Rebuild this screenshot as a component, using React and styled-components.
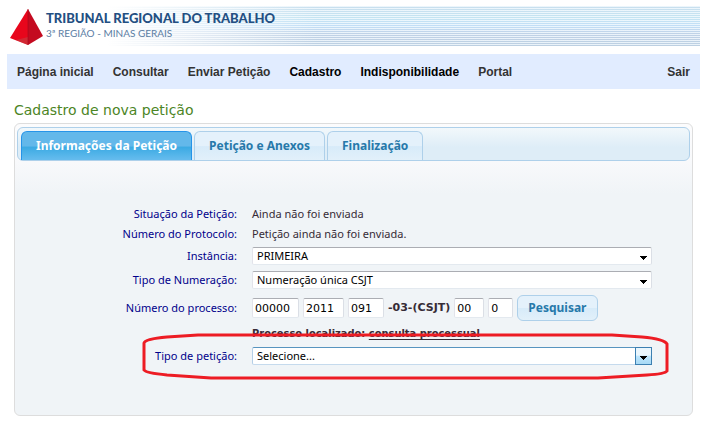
import React from "react";
import styled, { createGlobalStyle, css } from "styled-components";

const GlobalStyle = createGlobalStyle`
  * { box-sizing: border-box; }
  body {
    margin: 0;
    background: #fff;
    font-family: "Noto Sans", "Open Sans", sans-serif;
    font-size: 11px;
    color: #362b36;
  }
`;

const Page = styled.div`
  padding: 6px 6px 10px 7px;
`;

const Banner = styled.header`
  display: flex;
  align-items: flex-start;
  height: 40px;
  padding-left: 1px;
  background:
    linear-gradient(90deg, #fff 0, #fff 100px, rgba(255, 255, 255, 0) 310px),
    repeating-linear-gradient(180deg, rgba(245, 251, 255, 0.8) 0 1px, rgba(255, 255, 255, 0) 1px 2px),
    linear-gradient(180deg, #c9dfee 0, #c4e4f2 12px, #c2def6 20px, #c0d2e6 28px, #bdd0e2 40px);
`;

const Logo = styled.svg`
  width: 36px;
  height: 40px;
  flex: none;
`;

const BannerText = styled.div`
  padding: 5px 0 0 2px;
  font-family: Lato, sans-serif;
  color: #234f82;
`;

const Court = styled.div`
  font-size: 13px;
  line-height: 15px;
  font-weight: 900;
`;

const Region = styled.div`
  font-size: 10px;
  line-height: 14px;
  color: #5b7da3;
`;

const Menu = styled.nav`
  display: flex;
  align-items: center;
  gap: 19px;
  height: 35px;
  margin-top: 8px;
  padding: 0 10px;
  background: #e1ecff;
`;

const MenuLink = styled.a`
  font: bold 12px/16px "Liberation Sans", Arial, sans-serif;
  color: ${(p) => (p.$strong ? "#000" : "#333")};
  text-decoration: none;
  margin-left: ${(p) => (p.$end ? "auto" : "0")};
`;

const Title = styled.h1`
  margin: 12px 0 3px 7px;
  font: 14px/19px "DejaVu Sans", Verdana, sans-serif;
  color: #4c8526;
`;

const Panel = styled.main`
  margin: 0 7px;
  min-height: 293px;
  padding: 3px 2px;
  border: 1px solid #dddddd;
  border-radius: 6px;
  background: linear-gradient(180deg, #fcfcfd 0, #f8f9fb 38px, #f0f4f7 70px);
`;

const Tabs = styled.div`
  display: flex;
  align-items: flex-end;
  gap: 2px;
  height: 34px;
  padding-left: 3px;
  border: 1px solid #aed0ea;
  border-radius: 6px;
  background: linear-gradient(180deg, #f2f8fb, #deedf7 60%);
`;

const Tab = styled.button`
  height: 29px;
  padding: 0 14px;
  border: 1px solid ${(p) => (p.$active ? "#2694e8" : "#aed0ea")};
  border-bottom: 0;
  border-radius: 6px 6px 0 0;
  background: ${(p) =>
    p.$active
      ? "linear-gradient(180deg, #63b8ea 0 50%, #3baae3 54%, #66bcee 100%)"
      : "linear-gradient(180deg, #e4f1fb 0 50%, #d7ebf9 52%, #e2f0fa 100%)"};
  color: ${(p) => (p.$active ? "#fff" : "#2779aa")};
  font: bold 12px/18px "Noto Sans", "Open Sans", sans-serif;
  white-space: nowrap;
`;

const Form = styled.form`
  display: grid;
  grid-template-columns: 220px minmax(0, 1fr);
  column-gap: 15px;
  padding: 43px 38px 0 0;
`;

const Row = styled.div`
  display: grid;
  grid-column: 1 / -1;
  grid-template-columns: subgrid;
  align-items: center;
  position: relative;
  min-height: ${(p) => p.$height}px;
`;

const labelText = css`
  color: #00008b;
  text-align: right;
  line-height: 16px;
`;

const Label = styled.label`
  ${labelText}
`;

const Caption = styled.span`
  ${labelText}
`;

const Value = styled.span`
  line-height: 16px;
  grid-column: 2;
`;

const Segment = styled.strong`
  font: bold 11px/16px "DejaVu Sans", Verdana, sans-serif;
`;

const CaseNote = styled.strong`
  grid-column: 2;
  font: bold 11px/16px "DejaVu Sans Condensed", "Noto Sans", sans-serif;
`;

const Combo = styled.div`
  display: grid;
  grid-template-columns: minmax(0, 1fr) 15px;
  height: 18px;
  border: 1px solid;
  border-color: ${(p) => (p.$hot ? "#5794bf #3c7fb1 #c5daed #b5cfe7" : "#abadb3 #dbdfe6 #e3e9ef #e2e3ea")};
  border-radius: 2px;
  background: #fff;
`;

const Select = styled.select`
  grid-area: 1 / 1 / 2 / 3;
  width: 100%;
  height: 16px;
  padding: 0 20px 0 4px;
  border: 0;
  background: transparent;
  appearance: none;
  outline: 0;
  color: #000;
  font: 11px/16px "Noto Sans", "Open Sans", sans-serif;
`;

const Arrow = styled.span`
  grid-area: 1 / 2;
  display: grid;
  place-items: end center;
  padding-bottom: 4px;
  pointer-events: none;
  ${(p) =>
    p.$hot &&
    css`
      box-shadow: 0 0 0 1px #3c7fb1;
      background: linear-gradient(180deg, #eaf6fd 0 45%, #bee6fd 50%, #a7d9f5 100%);
    `}
`;

const Parts = styled.div`
  display: flex;
  align-items: center;
  gap: 4px;
`;

const PartInput = styled.input`
  width: ${(p) => p.$width}px;
  height: 20px;
  padding: 0 2px;
  border: 1px solid;
  border-color: #abadb3 #dbdfe6 #e3e9ef #e2e3ea;
  border-radius: 2px;
  background: #fff;
  color: #000;
  font: 11px/16px "DejaVu Sans", Verdana, sans-serif;
`;

const SearchButton = styled.button`
  height: 26px;
  padding: 0 10px;
  border: 1px solid #aed0ea;
  border-radius: 6px;
  background: linear-gradient(180deg, #e4f1fb 0 50%, #d7ebf9 52%, #e2f0fa 100%);
  color: #2779aa;
  font: bold 12px/16px "Noto Sans", "Open Sans", sans-serif;
`;

const CaseLink = styled.a`
  color: inherit;
  text-underline-offset: 2px;
`;

const Ring = styled.svg`
  position: absolute;
  top: -11px;
  left: 125px;
  width: calc(100% - 108px);
  height: 48px;
  overflow: visible;
  pointer-events: none;
`;

const Triangle = () => (
  <svg width="7" height="4" viewBox="0 0 7 4" shapeRendering="crispEdges" aria-hidden="true">
    <path d="M0 0h7v1H6v1H5v1H4v1H3V3H2V2H1V1H0z" />
  </svg>
);

function Dropdown({ id, value, hot }) {
  return (
    <Combo $hot={hot}>
      <Select id={id} defaultValue={value}>
        <option>{value}</option>
      </Select>
      <Arrow $hot={hot}>
        <Triangle />
      </Arrow>
    </Combo>
  );
}

const menu = [
  { text: "Página inicial" },
  { text: "Consultar" },
  { text: "Enviar Petição" },
  { text: "Cadastro", strong: true },
  { text: "Indisponibilidade", strong: true },
  { text: "Portal" },
  { text: "Sair", end: true },
];

const tabs = ["Informações da Petição", "Petição e Anexos", "Finalização"];

export default function App() {
  return (
    <>
      <GlobalStyle />
      <Page>
        <Banner>
          <Logo viewBox="0 0 36 40" aria-hidden="true">
            <path d="M20 3L2 32l18 7z" fill="#e8061c" />
            <path d="M20 3l15 27-15 9z" fill="#c40a20" />
            <path d="M8 34l12-3v8z" fill="#b5524f" fillOpacity="0.45" />
            <path d="M20 3v36" stroke="#9c0a1c" strokeWidth="1" strokeOpacity="0.6" />
          </Logo>
          <BannerText>
            <Court>TRIBUNAL REGIONAL DO TRABALHO</Court>
            <Region>3ª REGIÃO - MINAS GERAIS</Region>
          </BannerText>
        </Banner>
        <Menu>
          {menu.map((m) => (
            <MenuLink key={m.text} href="#" $strong={m.strong} $end={m.end}>
              {m.text}
            </MenuLink>
          ))}
        </Menu>
        <Title>Cadastro de nova petição</Title>
        <Panel>
          <Tabs role="tablist">
            {tabs.map((t, i) => (
              <Tab key={t} type="button" role="tab" aria-selected={i === 0} $active={i === 0}>
                {t}
              </Tab>
            ))}
          </Tabs>
          <Form>
            <Row $height={20}>
              <Caption>Situação da Petição:</Caption>
              <Value>Ainda não foi enviada</Value>
            </Row>
            <Row $height={20}>
              <Caption>Número do Protocolo:</Caption>
              <Value>Petição ainda não foi enviada.</Value>
            </Row>
            <Row $height={24}>
              <Label htmlFor="instancia">Instância:</Label>
              <Dropdown id="instancia" value="PRIMEIRA" />
            </Row>
            <Row $height={24}>
              <Label htmlFor="numeracao">Tipo de Numeração:</Label>
              <Dropdown id="numeracao" value="Numeração única CSJT" />
            </Row>
            <Row $height={32}>
              <Label htmlFor="processo">Número do processo:</Label>
              <Parts>
                <PartInput id="processo" $width={47} defaultValue="00000" />
                <PartInput aria-label="Ano" $width={41} defaultValue="2011" />
                <PartInput aria-label="Vara" $width={36} defaultValue="091" />
                <Segment>-03-(CSJT)</Segment>
                <PartInput aria-label="Origem" $width={30} defaultValue="00" />
                <PartInput aria-label="Dígito" $width={25} defaultValue="0" />
                <SearchButton type="button">Pesquisar</SearchButton>
              </Parts>
            </Row>
            <Row $height={20}>
              <CaseNote>
                Processo localizado: <CaseLink href="#">consulta processual</CaseLink>
              </CaseNote>
            </Row>
            <Row $height={24}>
              <Label htmlFor="tipo">Tipo de petição:</Label>
              <Dropdown id="tipo" value="Selecione..." hot />
              <Ring viewBox="0 0 527 48" preserveAspectRatio="none" aria-hidden="true">
                <path
                  d="M56 2H470L500 4Q522 6 525 11V38Q523 41 505 42L456 45H69L25 42Q4 40 2 37V10Q3 6 25 4Z"
                  fill="none"
                  stroke="#ed1c24"
                  strokeWidth="3"
                />
              </Ring>
            </Row>
          </Form>
        </Panel>
      </Page>
    </>
  );
}
